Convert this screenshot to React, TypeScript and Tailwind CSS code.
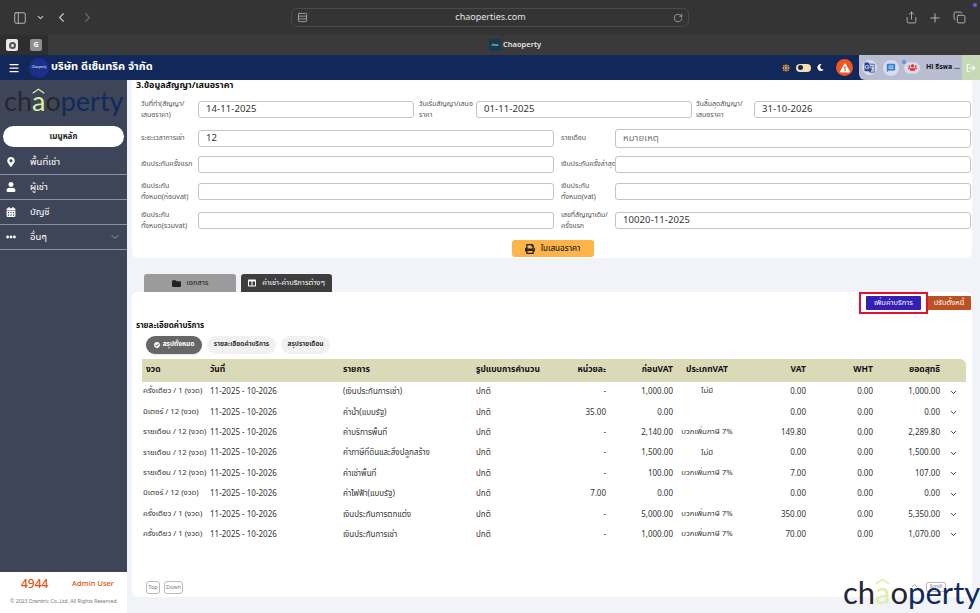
import React from "react";
import { ChevronDown, ChevronLeft, ChevronRight, ChevronUp, Copy, LogOut, Menu, PanelLeft, Plus, RotateCw, Share, Rows3 } from "lucide-react";
import { FaCalendarAlt, FaCheckCircle, FaColumns, FaEllipsisH, FaExclamationTriangle, FaFolder, FaMapMarkerAlt, FaMoon, FaPrint, FaSun, FaUser, FaUsers } from "react-icons/fa";
import { MdGTranslate, MdMessage } from "react-icons/md";

const font = { fontFamily: '"Noto Sans Thai","Inter","Noto Sans","Liberation Sans",sans-serif' };

function Logo({ className, lime }: { className: string; lime: string }) {
  return (
    <div className={"flex items-baseline leading-none " + className} style={{ fontFamily: '"Lato","Inter",sans-serif' }}>
      <span className="text-[#26262c]">ch</span>
      <span className="relative" style={{ color: lime }}>
        a
        <svg className="absolute left-[2%] top-[4%] h-[24%] w-[96%]" viewBox="0 0 20 8" fill="none" stroke={lime} strokeWidth="2">
          <path d="M1 7 L10 1 L19 7" />
        </svg>
      </span>
      <span className="text-[#26262c]">o</span>
      <span className="text-[#0f2a5c]">perty</span>
    </div>
  );
}

function Field({ w, value, placeholder, h = "h-[17px]" }: { w: string; value?: string; placeholder?: string; h?: string }) {
  return (
    <div className={`${w} ${h} flex shrink-0 items-center rounded-[3px] border border-[#c4c4c4] bg-white pl-[7px] text-[9.5px] tracking-[0.01em] text-[#333]`}>
      {value ?? <span className="text-[#777]">{placeholder}</span>}
    </div>
  );
}

function Label({ w, children }: { w: string; children: React.ReactNode }) {
  return <div className={`${w} shrink-0 whitespace-nowrap text-[7px] leading-[11px] text-[#555]`}>{children}</div>;
}

function FormRow({ className, children }: { className: string; children: React.ReactNode }) {
  return <div className={`flex h-[17px] items-center pl-[5px] ${className}`}>{children}</div>;
}

const rows = [
  ["ครั้งเดียว / 1 (งวด)", "(เงินประกันการเช่า)", "-", "1,000.00", "ไม่มี", "0.00", "0.00", "1,000.00"],
  ["มิเตอร์ / 12 (งวด)", "ค่าน้ำ(แบบรัฐ)", "35.00", "0.00", "", "0.00", "0.00", "0.00"],
  ["รายเดือน / 12 (งวด)", "ค่าบริการพื้นที่", "-", "2,140.00", "บวกเพิ่มภาษี 7%", "149.80", "0.00", "2,289.80"],
  ["รายเดือน / 12 (งวด)", "ค่าภาษีที่ดินและสิ่งปลูกสร้าง", "-", "1,500.00", "ไม่มี", "0.00", "0.00", "1,500.00"],
  ["รายเดือน / 12 (งวด)", "ค่าเช่าพื้นที่", "-", "100.00", "บวกเพิ่มภาษี 7%", "7.00", "0.00", "107.00"],
  ["มิเตอร์ / 12 (งวด)", "ค่าไฟฟ้า(แบบรัฐ)", "7.00", "0.00", "", "0.00", "0.00", "0.00"],
  ["ครั้งเดียว / 1 (งวด)", "เงินประกันการตกแต่ง", "-", "5,000.00", "บวกเพิ่มภาษี 7%", "350.00", "0.00", "5,350.00"],
  ["ครั้งเดียว / 1 (งวด)", "เงินประกันการเช่า", "-", "1,000.00", "บวกเพิ่มภาษี 7%", "70.00", "0.00", "1,070.00"],
];

const cols = "grid grid-cols-[68px_133px_133px_90px_40px_67px_68px_65px_67px_67px_26px] items-center";

function SideItem({ icon, label, extra }: { icon: React.ReactNode; label: string; extra?: boolean }) {
  return (
    <div className="flex h-[25px] items-center border-b border-[#8b8f9c] pl-[6px] text-white">
      <span className="flex w-[24px] justify-start text-[10px]">{icon}</span>
      <span className="text-[9.5px]">{label}</span>
      {extra && <ChevronDown className="ml-auto mr-[6px] h-3 w-3 text-[#9a9eab]" />}
    </div>
  );
}

export default function App() {
  return (
    <div className="relative flex h-[613px] w-[980px] flex-col overflow-hidden bg-[#f1f3f8]" style={font}>
      {/* Browser toolbar */}
      <div className="flex h-[35px] shrink-0 items-center bg-[#343434] text-[#c4c4c4]">
        <PanelLeft className="ml-[13px] h-[14px] w-[14px]" strokeWidth={1.5} />
        <ChevronDown className="ml-[9px] h-[9px] w-[9px]" strokeWidth={3} />
        <ChevronLeft className="ml-[9px] h-[15px] w-[15px]" strokeWidth={1.8} />
        <ChevronRight className="ml-[11px] h-[15px] w-[15px] text-[#6b6b6b]" strokeWidth={1.8} />
        <div className="ml-[196px] flex h-[19px] w-[398px] items-center rounded-[6px] border border-[#4a4a4a] px-[5px]">
          <Rows3 className="h-[11px] w-[11px]" strokeWidth={1.5} />
          <span className="flex-1 text-center text-[9px] text-[#e4e4e4]">chaoperties.com</span>
          <RotateCw className="h-[10px] w-[10px]" strokeWidth={1.5} />
        </div>
        <Share className="ml-[216px] h-[13px] w-[13px]" strokeWidth={1.5} />
        <Plus className="ml-[10px] h-[14px] w-[14px]" strokeWidth={1.5} />
        <Copy className="ml-[11px] h-[13px] w-[13px]" strokeWidth={1.5} />
      </div>
      <span className="absolute left-[973px] top-[3px] h-[4px] w-[4px] rounded-full bg-[#6a5cf0]" />
      {/* Tab strip */}
      <div className="flex h-[20px] shrink-0 items-center bg-[#3a3a3a]">
        <div className="flex h-full w-[24px] items-center justify-center bg-[#2e2e2e]">
          <div className="flex h-[12px] w-[12px] items-center justify-center rounded-[2px] bg-[#e8e8e8]">
            <div className="h-[7px] w-[7px] rounded-full border-2 border-[#555]" />
          </div>
        </div>
        <div className="flex h-full w-[24px] items-center justify-center bg-[#2e2e2e]">
          <div className="flex h-[12px] w-[12px] items-center justify-center rounded-[2px] bg-[#8f8f8f] text-[7px] font-bold text-white">G</div>
        </div>
        <div className="ml-[441px] flex h-[12px] w-[12px] items-center justify-center rounded-[2px] bg-[#17394d] text-[3px] text-white">chao</div>
        <span className="ml-[2px] text-[7.5px] font-semibold text-[#e6e6e6]">Chaoperty</span>
      </div>
      {/* App header */}
      <div className="flex h-[25px] shrink-0 items-center bg-[#12275a]">
        <Menu className="ml-[8px] h-[12px] w-[12px] text-white" strokeWidth={2.5} />
        <div className="ml-[9px] flex h-[20px] w-[20px] items-center justify-center rounded-full bg-[#1b2f8c] text-[3px] text-white">Chaoperty</div>
        <span className="ml-[2px] text-[11px] font-bold text-white">บริษัท ดีเซ็นทริค จำกัด</span>
        <FaSun className="ml-auto h-[8px] w-[8px] text-[#e0a13a]" />
        <div className="ml-[6px] flex h-[8px] w-[15px] items-center rounded-full bg-[#f5deb0] pl-[2px]">
          <div className="h-[5px] w-[5px] rounded-full bg-[#12275a]" />
        </div>
        <FaMoon className="ml-[6px] h-[7px] w-[7px] text-white" />
        <div className="ml-[12px] flex h-[17px] w-[17px] items-center justify-center rounded-full bg-[#f0561f] text-white">
          <FaExclamationTriangle className="h-[10px] w-[10px]" />
        </div>
        <div className="ml-[6px] flex h-full w-[121px] items-center rounded-bl-[6px] bg-[#b9bdd1] pl-[2px]">
          <div className="ml-[1px] flex h-[15px] w-[15px] items-center justify-center rounded-full bg-[#d9dbe6]"><MdGTranslate className="h-[11px] w-[11px] text-[#23459c]" /></div>
          <div className="ml-[6px] flex h-[16px] w-[16px] items-center justify-center rounded-full bg-[#d9dbe6]"><MdMessage className="h-[10px] w-[10px] text-[#2f7ed8]" /></div>
          <div className="relative ml-[5px] flex h-[12px] w-[16px] items-center justify-center rounded-full bg-[#d9dbe6]">
            <FaUsers className="h-[9px] w-[9px] text-[#d33]" />
            <span className="absolute left-[-2px] top-[-2px] h-[4px] w-[4px] rounded-full border border-[#2f7ed8]" />
          </div>
          <span className="ml-[6px] whitespace-nowrap text-[7px] font-bold text-[#15151f]">Hi ธีรพล ...</span>
          <div className="ml-auto flex h-full w-[18px] items-center justify-center bg-[#c5d9b4]"><LogOut className="h-[10px] w-[10px] text-white" strokeWidth={2.5} /></div>
        </div>
      </div>

      <div className="flex min-h-0 flex-1">
        {/* Sidebar */}
        <aside className="flex w-[127px] shrink-0 flex-col">
          <div className="flex-1 bg-[#3f4559]">
            <div className="h-[46px] overflow-hidden pl-[4px] pt-[7px]">
              <Logo className="text-[27px]" lime="#dcefa0" />
            </div>
            <div className="mx-[3px] flex h-[21px] items-center justify-center rounded-full bg-white text-[8px] font-bold text-[#222]">เมนูหลัก</div>
            <div className="mt-[3px]">
              <SideItem icon={<FaMapMarkerAlt />} label="พื้นที่เช่า" />
              <SideItem icon={<FaUser />} label="ผู้เช่า" />
              <SideItem icon={<FaCalendarAlt />} label="บัญชี" />
              <SideItem icon={<FaEllipsisH />} label="อื่นๆ" extra />
            </div>
          </div>
          <div className="h-[41px] bg-white">
            <div className="flex items-center pl-[21px] pt-[3px]">
              <span className="w-[51px] text-[12px] font-medium text-[#e0520f]">4944</span>
              <span className="text-[7.5px] font-medium text-[#e0520f]">Admin User</span>
            </div>
            <div className="mt-[5px] whitespace-nowrap pl-[10px] text-[5.2px] text-[#777]">© 2023 Dzentric Co.,Ltd. All Rights Reserved</div>
          </div>
        </aside>

        {/* Main */}
        <main className="min-w-0 flex-1 pl-[5px] pr-[8px]">
          <section className="h-[178px] rounded-b-[6px] bg-white pl-[4px] pr-[1px]">
            <div className="text-[9px] font-bold leading-[11px] text-[#111]">3.ข้อมูลสัญญา/เสนอราคา</div>

            <FormRow className="mt-[10px]">
              <Label w="w-[57px]">วันที่ทำ(สัญญา/<br />เสนอราคา)</Label>
              <Field w="w-[216px]" value="14-11-2025" />
              <div className="w-[5px]" />
              <Label w="w-[57px]">วันเริ่มสัญญา/เสนอ<br />ราคา</Label>
              <Field w="w-[216px]" value="01-11-2025" />
              <div className="w-[4px]" />
              <Label w="w-[58px]">วันสิ้นสุดสัญญา/<br />เสนอราคา</Label>
              <Field w="w-[217px]" value="31-10-2026" />
            </FormRow>
            <FormRow className="mt-[12px]">
              <Label w="w-[57px]">ระยะเวลาการเช่า</Label>
              <Field w="w-[356px]" value="12" />
              <div className="w-[7px]" />
              <Label w="w-[54px]">รายเดือน</Label>
              <Field w="w-[356px]" placeholder="หมายเหตุ" h="h-[19px]" />
            </FormRow>
            <FormRow className="mt-[9px]">
              <Label w="w-[57px]">เงินประกันครั้งแรก</Label>
              <Field w="w-[356px]" value="" />
              <div className="w-[7px]" />
              <Label w="w-[54px]">เงินประกันครั้งล่าสุด</Label>
              <Field w="w-[356px]" value="" />
            </FormRow>
            <FormRow className="mt-[10px]">
              <Label w="w-[57px]">เงินประกัน<br />ทั้งหมด(ก่อนvat)</Label>
              <Field w="w-[356px]" value="" />
              <div className="w-[7px]" />
              <Label w="w-[54px]">เงินประกัน<br />ทั้งหมด(vat)</Label>
              <Field w="w-[356px]" value="" />
            </FormRow>
            <FormRow className="mt-[12px]">
              <Label w="w-[57px]">เงินประกัน<br />ทั้งหมด(รวมvat)</Label>
              <Field w="w-[356px]" value="" />
              <div className="w-[7px]" />
              <Label w="w-[54px]">เลขที่สัญญาเดิม/<br />ครั้งแรก</Label>
              <Field w="w-[356px]" value="10020-11-2025" />
            </FormRow>
            <div className="mt-[11px] flex justify-center pr-[2px]">
              <div className="flex h-[17px] w-[82px] items-center justify-center gap-[6px] rounded-[3px] bg-[#fdb54a] text-[8px] font-medium text-[#222]">
                <FaPrint className="h-[10px] w-[10px]" />ใบเสนอราคา
              </div>
            </div>
          </section>

          {/* Tabs */}
          <div className="mt-[14px] flex h-[20px] items-end gap-[5px] pl-[12px]">
            <div className="flex h-[18px] w-[92px] items-center justify-center gap-[6px] rounded-t-[3px] bg-[#9b9b9b] text-[7.5px] text-[#222]">
              <FaFolder className="h-[9px] w-[9px]" />เอกสาร
            </div>
            <div className="flex h-[18px] w-[91px] items-center justify-center gap-[6px] rounded-t-[3px] bg-[#3e3e3e] text-[7.5px] text-white">
              <FaColumns className="h-[8px] w-[8px]" />ค่าเช่า-ค่าบริการต่างๆ
            </div>
          </div>

          {/* Service card */}
          <section className="relative h-[305px] rounded-[6px] bg-white">
            <div className="flex justify-end pr-[1px] pt-[4px]">
              <div className="relative mr-[6px] flex h-[14px] w-[55px] items-center justify-center rounded-[1px] bg-[#3420b4] text-[7.5px] text-white">
                เพิ่มค่าบริการ
                <span className="absolute -inset-x-[7px] -top-[4px] -bottom-[4px] border-2 border-[#e3102f]" />
              </div>
              <div className="flex h-[14px] w-[44px] items-center justify-center rounded-[1px] bg-[#bb5124] text-[7.5px] text-white">ปรับตั้งหนี้</div>
            </div>
            <div className="mt-[9px] pl-[4px] text-[8px] font-bold leading-[14px] text-[#111]">รายละเอียดค่าบริการ</div>
            <div className="mt-[3px] flex gap-[5px] pl-[14px]">
              <div className="flex h-[18px] w-[56px] items-center justify-center gap-[3px] rounded-full bg-[#666] text-[6.5px] font-bold text-white shadow-sm">
                <FaCheckCircle className="h-[6px] w-[6px]" />สรุปทั้งหมด
              </div>
              <div className="flex h-[18px] w-[69px] items-center justify-center rounded-full bg-[#f1f1f1] text-[6.5px] font-bold text-[#333]">รายละเอียดค่าบริการ</div>
              <div className="flex h-[18px] w-[49px] items-center justify-center rounded-full bg-[#f1f1f1] text-[6.5px] font-bold text-[#333]">สรุปรายเดือน</div>
            </div>
            <div className="ml-[10px] mt-[5px] w-[824px]">
              <div className={`${cols} h-[23px] rounded-tr-[6px] bg-[#dadab8] text-[8.5px] font-bold text-[#111]`}>
                <span className="pl-[4px]">งวด</span>
                <span>วันที่</span>
                <span>รายการ</span>
                <span>รูปแบบการคำนวน</span>
                <span className="justify-self-end whitespace-nowrap">หน่วยละ</span>
                <span className="text-right">ก่อนVAT</span>
                <span className="whitespace-nowrap text-center">ประเภทVAT</span>
                <span className="text-right">VAT</span>
                <span className="text-right">WHT</span>
                <span className="text-right">ยอดสุทธิ</span>
                <span />
              </div>
              <div>
                {rows.map((r, i) => (
                  <div key={i} className={`${cols} h-[20.4px] text-[8px] text-[#333]`}>
                    <span className="whitespace-nowrap pl-[1px] text-[7.8px]">{r[0]}</span>
                    <span className="whitespace-nowrap">11-2025 - 10-2026</span>
                    <span className="whitespace-nowrap">{r[1]}</span>
                    <span>ปกติ</span>
                    <span className="text-right">{r[2]}</span>
                    <span className="text-right">{r[3]}</span>
                    <span className="whitespace-nowrap text-center text-[7.8px]">{r[4]}</span>
                    <span className="text-right">{r[5]}</span>
                    <span className="text-right">{r[6]}</span>
                    <span className="text-right">{r[7]}</span>
                    <ChevronDown className="ml-[9px] h-[9px] w-[9px]" strokeWidth={2.5} />
                  </div>
                ))}
              </div>
            </div>
            <div className="absolute bottom-[3px] left-[14px] flex gap-[4px]">
              <div className="flex h-[13px] w-[14px] items-center justify-center rounded-[3px] border border-[#bbb] text-[5.5px] text-[#777]">Top</div>
              <div className="flex h-[13px] w-[19px] items-center justify-center rounded-[3px] border border-[#bbb] text-[5.5px] text-[#777]">Down</div>
            </div>
          </section>
        </main>
      </div>

      {/* Overlay watermark */}
      <ChevronUp className="absolute left-[910px] top-[581px] h-[9px] w-[9px] text-[#999]" strokeWidth={2.5} />
      <div className="absolute left-[926px] top-[582px] flex h-[10px] w-[20px] items-center justify-center rounded-[2px] border border-[#bbb] text-[5px] text-[#777]">Scroll</div>
      <div className="absolute left-[843px] top-[577px]">
        <Logo className="text-[31px]" lime="#deefa5" />
      </div>
    </div>
  );
}
